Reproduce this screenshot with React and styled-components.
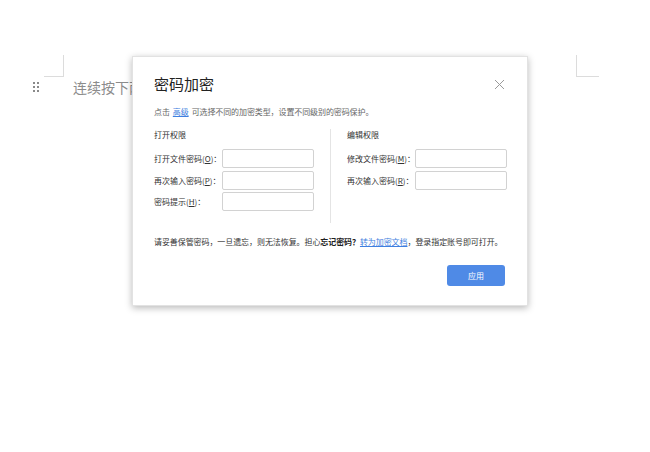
import React from 'react';
import styled, { createGlobalStyle } from 'styled-components';

const GlobalStyle = createGlobalStyle`
  html, body {
    margin: 0;
    padding: 0;
    background: #fff;
    font-family: "Noto Sans CJK SC", "Liberation Sans", sans-serif;
  }
`;

const Screen = styled.div`
  position: relative;
  width: 650px;
  height: 452px;
  overflow: hidden;
  background: #fff;
`;

const PageArea = styled.div`
  position: relative;
  margin: 77px 0 0 64px;
  width: 512px;

  &::before {
    content: '';
    position: absolute;
    top: -22px;
    left: -20px;
    width: 19px;
    height: 21px;
    border-right: 1px solid #dcdcdc;
    border-bottom: 1px solid #dcdcdc;
  }

  &::after {
    content: '';
    position: absolute;
    top: -22px;
    left: 100%;
    width: 22px;
    height: 21px;
    border-left: 1px solid #dcdcdc;
    border-bottom: 1px solid #dcdcdc;
  }
`;

const DocLine = styled.div`
  position: relative;
  padding-left: 9px;
  font-size: 14px;
  line-height: 20px;
  color: #8c8c8c;
  white-space: nowrap;
`;

const Handle = styled.svg`
  position: absolute;
  left: -31px;
  top: 5px;
`;

const Dialog = styled.div`
  position: absolute;
  left: 132px;
  top: 56px;
  width: 396px;
  height: 250px;
  box-sizing: border-box;
  padding: 15px 22px 0 21px;
  background: #fff;
  border: 1px solid #e2e2e2;
  box-shadow: 0 2px 7px rgba(0, 0, 0, 0.28);
`;

const Title = styled.div`
  font-size: 15px;
  line-height: 24px;
  color: #222;
`;

const Close = styled.svg`
  position: absolute;
  top: 22px;
  right: 22px;
`;

const Hint = styled.div`
  margin-top: 10px;
  font-size: 8px;
  line-height: 12px;
  color: #666;
  letter-spacing: -0.1px;
  white-space: nowrap;
`;

const Link = styled.a`
  color: #3f7fe0;
  text-decoration: underline;
  margin: 0 ${p => (p.$spaced ? '3px' : '0')};
`;

const Columns = styled.div`
  display: grid;
  grid-template-columns: 160px 1px 160px;
  column-gap: 16px;
  margin-top: 11px;
  height: 94px;
`;

const Divider = styled.div`
  background: #e4e4e4;
`;

const Section = styled.div`
  display: flex;
  flex-direction: column;
`;

const SectionTitle = styled.div`
  font-size: 8px;
  line-height: 12px;
  color: #333;
  margin-bottom: 8px;
`;

const Fields = styled.div`
  display: flex;
  flex-direction: column;
  gap: 2.5px;
`;

const Row = styled.div`
  display: flex;
  align-items: center;
  justify-content: space-between;
`;

const Label = styled.span`
  font-size: 8px;
  color: #333;
  white-space: nowrap;
`;

const Input = styled.input`
  width: 92px;
  height: 19px;
  box-sizing: border-box;
  border: 1px solid #d2d2d2;
  border-radius: 2px;
  padding: 0 4px;
  font-size: 8px;
  outline: none;
`;

const Notice = styled.div`
  margin-top: 13px;
  font-size: 8px;
  line-height: 12px;
  color: #333;
  white-space: nowrap;
  letter-spacing: -0.08px;

  b {
    font-weight: 700;
    color: #222;
  }
`;

const Footer = styled.div`
  display: flex;
  justify-content: flex-end;
  margin-top: 17px;
`;

const ApplyButton = styled.button`
  width: 58px;
  height: 21px;
  border: none;
  border-radius: 3px;
  background: #4f8ae6;
  color: #fff;
  font-family: inherit;
  font-size: 8px;
  padding: 0;
`;

const leftFields = [
  { text: '打开文件密码', key: 'O' },
  { text: '再次输入密码', key: 'P' },
  { text: '密码提示', key: 'H' },
];

const rightFields = [
  { text: '修改文件密码', key: 'M' },
  { text: '再次输入密码', key: 'R' },
];

const FieldRow = ({ text, hotkey }) => (
  <Row>
    <Label>
      {text}(<u>{hotkey}</u>)：
    </Label>
    <Input type="password" />
  </Row>
);

export default function App() {
  return (
    <Screen>
      <GlobalStyle />
      <PageArea>
        <DocLine>
          <Handle width="6" height="10" viewBox="0 0 6 10">
            {[0, 1].map(c =>
              [0, 1, 2].map(r => (
                <rect key={`${c}${r}`} x={c * 4} y={r * 4} width="2" height="2" fill="#8a8a8a" />
              ))
            )}
          </Handle>
          连续按下两次回车键，即可快速插入表格
        </DocLine>
      </PageArea>

      <Dialog>
        <Title>密码加密</Title>
        <Close width="11" height="11" viewBox="0 0 11 11">
          <path d="M1 1 L10 10 M10 1 L1 10" stroke="#9a9a9a" strokeWidth="1" fill="none" />
        </Close>
        <Hint>
          点击<Link $spaced>高级</Link>可选择不同的加密类型，设置不同级别的密码保护。
        </Hint>
        <Columns>
          <Section>
            <SectionTitle>打开权限</SectionTitle>
            <Fields>
              {leftFields.map(f => (
                <FieldRow key={f.key} text={f.text} hotkey={f.key} />
              ))}
            </Fields>
          </Section>
          <Divider />
          <Section>
            <SectionTitle>编辑权限</SectionTitle>
            <Fields>
              {rightFields.map(f => (
                <FieldRow key={f.key} text={f.text} hotkey={f.key} />
              ))}
            </Fields>
          </Section>
        </Columns>
        <Notice>
          请妥善保管密码，一旦遗忘，则无法恢复。担心<b>忘记密码？</b>
          <Link>转为加密文档</Link>，登录指定账号即可打开。
        </Notice>
        <Footer>
          <ApplyButton>应用</ApplyButton>
        </Footer>
      </Dialog>
    </Screen>
  );
}
